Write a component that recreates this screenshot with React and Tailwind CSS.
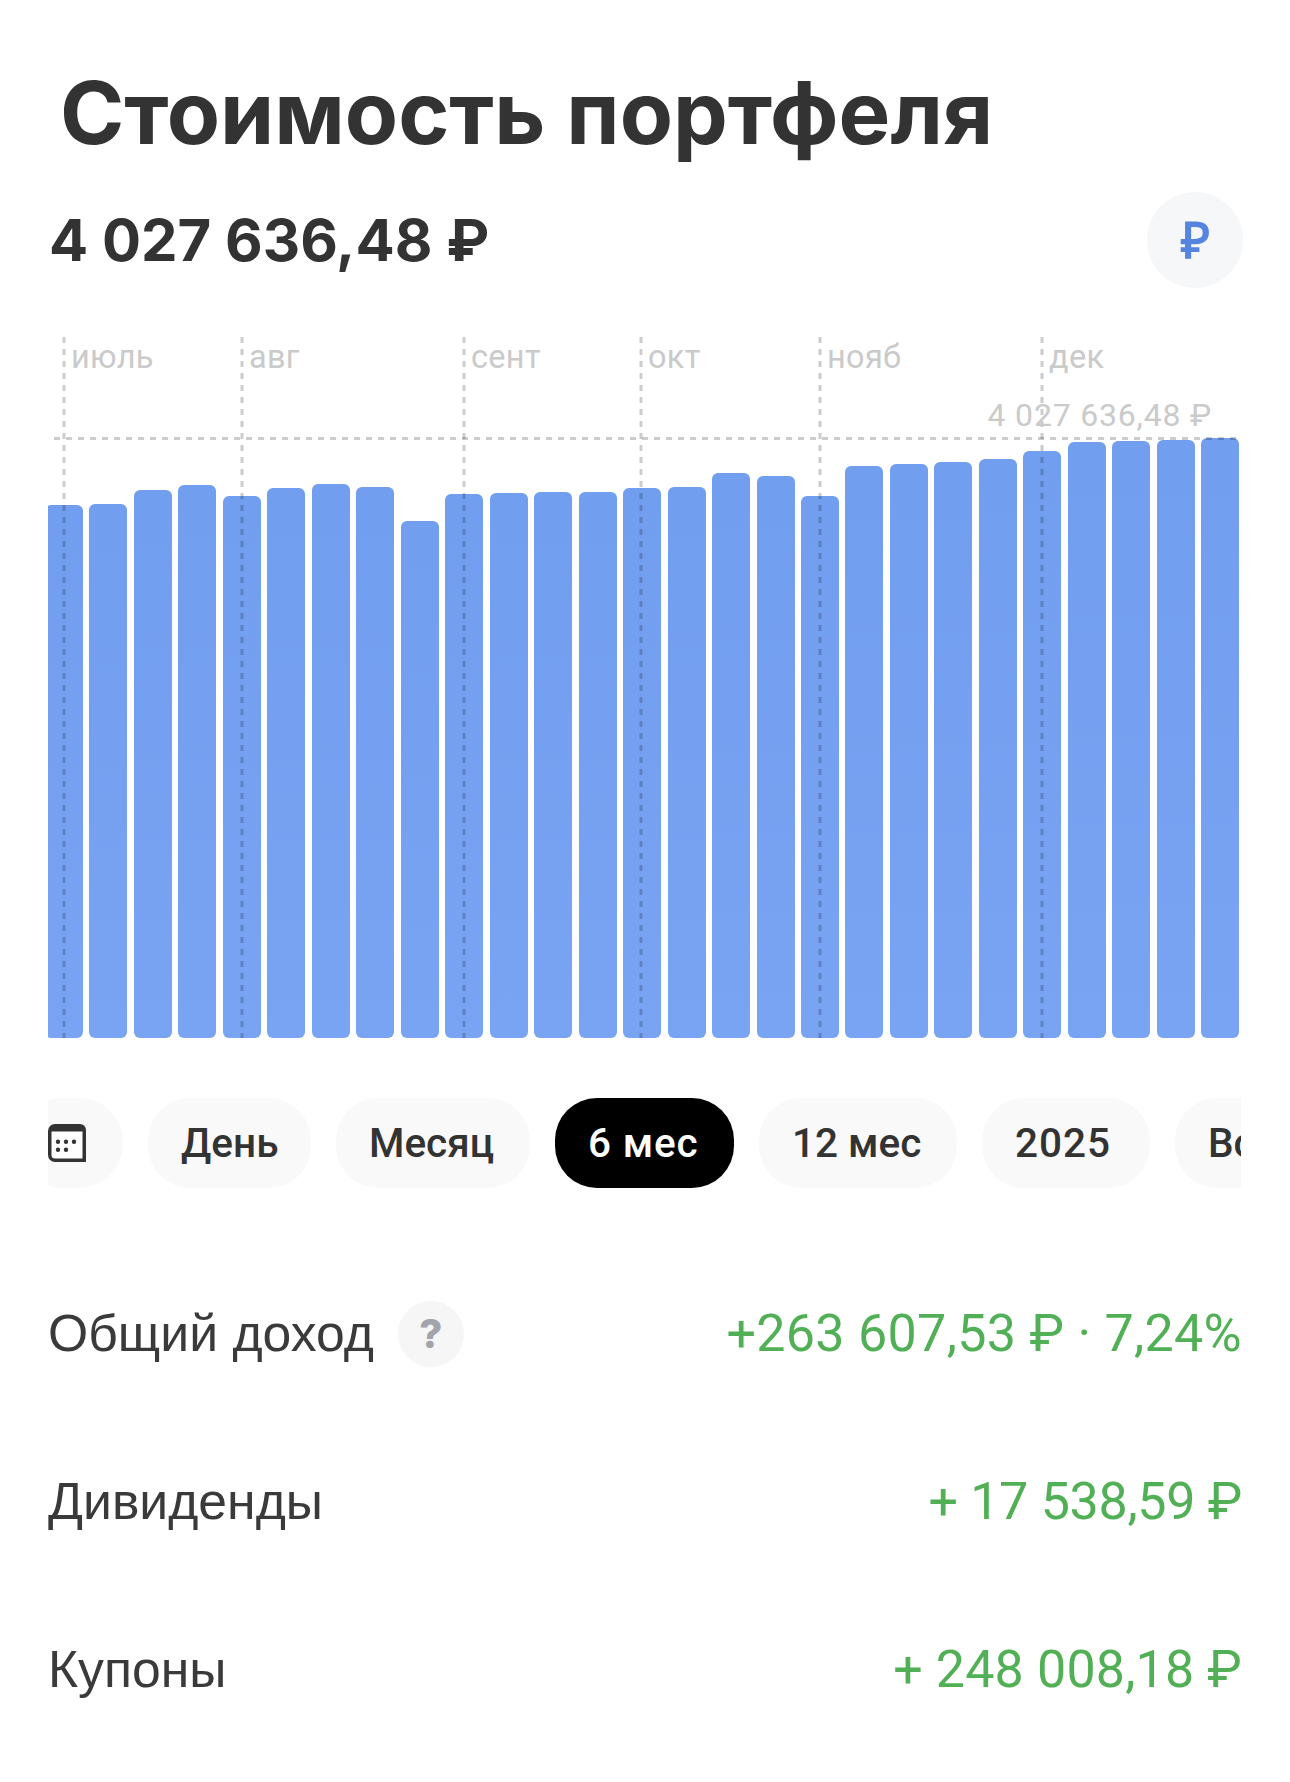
const BAR_TOPS = [505, 504, 490, 485, 496, 488, 484, 487, 521, 494, 493, 492, 492, 488, 487, 473, 476, 496, 466, 464, 462, 459, 451, 442, 441, 440, 438];
const BOTTOM = 1038;
const MONTHS = [
  { label: "июль", x: 64 },
  { label: "авг", x: 242 },
  { label: "сент", x: 464 },
  { label: "окт", x: 641 },
  { label: "нояб", x: 820 },
  { label: "дек", x: 1042 },
];
const PILLS = [
  { label: "День", size: "w-[163px]" },
  { label: "Месяц", size: "w-[194px]" },
  { label: "6 мес", size: "w-[179px] tracking-[0.8px]" },
  { label: "12 мес", size: "w-[198px]" },
  { label: "2025", size: "w-[168px] tracking-[1px]" },
  { label: "Всё", size: "w-[120px]" },
];
const ROWS = [
  { label: "Общий доход", value: "+263 607,53 ₽ · 7,24%", help: true, spacing: "tracking-[0.3px]" },
  { label: "Дивиденды", value: "+ 17 538,59 ₽", spacing: "tracking-[-0.3px]" },
  { label: "Купоны", value: "+ 248 008,18 ₽", spacing: "tracking-[0.15px]" },
];

function Chart() {
  return (
    <div className="relative h-[724px] w-[1192px] mt-[26px] ml-[48px]">
      <div className="absolute left-0 right-0 bottom-0 top-0 overflow-hidden flex items-end">
        <div className="flex items-end gap-[6.48px] -ml-[3px]">
          {BAR_TOPS.map((t, i) => (
            <div
              key={i}
              className="w-[38px] shrink-0 rounded-[6px] bg-gradient-to-b from-[#729eef] to-[#79a3f3]"
              style={{ height: BOTTOM - t }}
            />
          ))}
        </div>
      </div>
      <svg className="absolute left-0 top-0" width="1192" height="724">
        {MONTHS.map((m) => (
          <line key={m.x} x1={m.x - 48} x2={m.x - 48} y1="23" y2="724" stroke="#000" strokeOpacity="0.2" strokeWidth="3" strokeDasharray="6 6" />
        ))}
        <line x1="6" x2="1188" y1="124.5" y2="124.5" stroke="#000" strokeOpacity="0.2" strokeWidth="3" strokeDasharray="6 6" />
      </svg>
      {MONTHS.map((m) => (
        <span
          key={m.label}
          className="absolute top-[25px] text-[32.5px] leading-[36px] tracking-[0.3px] text-[#cacaca] font-['Roboto',sans-serif]"
          style={{ left: m.x - 48 + 7 }}
        >
          {m.label}
        </span>
      ))}
      <span className="absolute top-[84px] right-[28px] text-[32px] leading-[34px] tracking-[0.8px] text-[#cacaca] font-['Roboto',sans-serif]">
        4 027 636,48 ₽
      </span>
    </div>
  );
}

function CalendarIcon() {
  return (
    <svg width="38" height="38" viewBox="0 0 38 38" className="block">
      <path d="M7 0h25a6 6 0 0 1 6 6v32H7a7 7 0 0 1-7-7V7a7 7 0 0 1 7-7z" fill="#333" />
      <path d="M3.5 7.5h31v27H7a3.5 3.5 0 0 1-3.5-3.5z" fill="#fff" />
      {[[10, 17.7], [18, 17.7], [26, 17.7], [10, 25.7], [18, 25.7]].map(([x, y]) => (
        <circle key={`${x}-${y}`} cx={x} cy={y} r="2.2" fill="#333" />
      ))}
    </svg>
  );
}

export default function App() {
  return (
    <div className="w-[1290px] h-[1782px] bg-white overflow-hidden font-['Liberation_Sans',sans-serif] text-[#333]">
      <h1 className="pt-[65px] pl-[60px] text-[87px] leading-[96px] font-bold font-['Inter',sans-serif]">Стоимость портфеля</h1>
      <div className="flex items-center justify-between pl-[49px] pr-[47px] mt-[31px]">
        <div className="text-[58px] leading-[72px] font-bold font-['Inter',sans-serif]">4 027 636,48 ₽</div>
        <div className="flex h-[96px] w-[96px] items-center justify-center rounded-full bg-[#f6f7f8] pt-[3px] text-[50px] font-bold text-[#5585e0]">₽</div>
      </div>
      <Chart />
      <div className="mt-[60px] ml-[48px] flex w-[1193px] gap-[25px] overflow-hidden">
        <div className="-ml-[30px] flex h-[90px] shrink-0 items-center rounded-[44px] bg-[#f9f9f9] pl-[29.5px] pr-[37px]">
          <CalendarIcon />
        </div>
        {PILLS.map((p) => (
          <div
            key={p.label}
            className={`flex h-[90px] shrink-0 items-center rounded-[42px] pl-[33.5px] font-['Roboto',sans-serif] text-[40.5px] font-medium ${p.size} ${p.label === "6 мес" ? "bg-black text-white" : "bg-[#f9f9f9] text-[#333]"}`}
          >
            {p.label}
          </div>
        ))}
      </div>
      <div className="mt-[62px] ml-[48px] w-[1194px]">
        {ROWS.map((r) => (
          <div key={r.label} className="flex h-[168px] items-center justify-between">
            <div className="flex items-center gap-[24px]">
              <span className="mb-[2px] text-[51.7px] leading-[60px] text-[#3a3a3a]">{r.label}</span>
              {r.help && (
                <span className="flex h-[66px] w-[66px] items-center justify-center rounded-full bg-[#f6f6f7] text-[40px] font-extrabold text-[#a3a3ad] font-['Inter',sans-serif]">?</span>
              )}
            </div>
            <span className={`font-['Roboto',sans-serif] text-[52px] leading-[60px] text-[#51b055] ${r.spacing}`}>{r.value}</span>
          </div>
        ))}
      </div>
    </div>
  );
}
